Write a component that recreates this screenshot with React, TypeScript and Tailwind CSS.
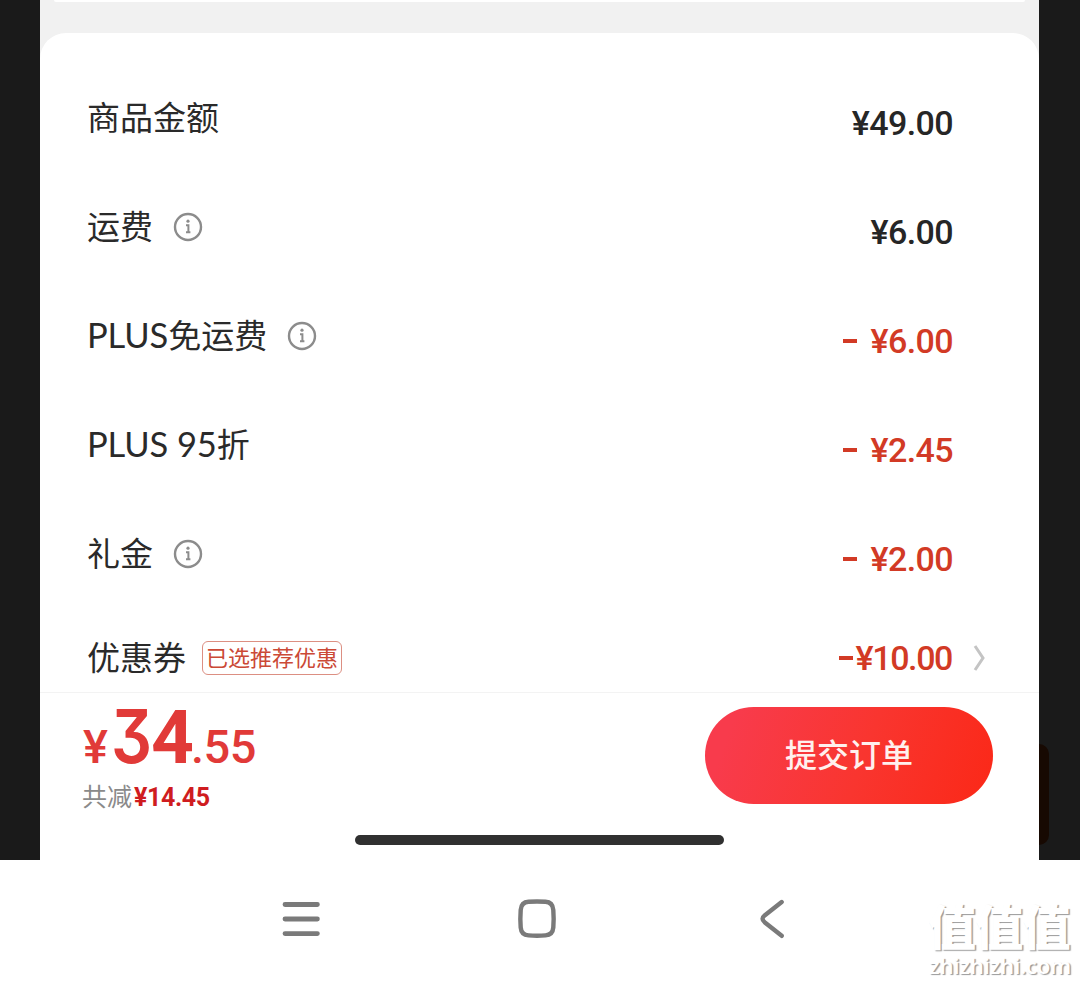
import React from "react";

const price = "font-['Roboto','Noto_Sans_CJK_SC',sans-serif] font-medium whitespace-pre";

function InfoIcon() {
  return (
    <svg className="ml-[20px] h-[30px] w-[30px] shrink-0" viewBox="0 0 30 30" fill="none" stroke="#8c8c8c">
      <circle cx="15" cy="15" r="13" strokeWidth="2.4" />
      <path d="M13 13.2h2.4v7M13 20.2h4.4" strokeWidth="2" />
      <circle cx="15" cy="9.2" r="1.6" fill="#8c8c8c" stroke="none" />
    </svg>
  );
}

type RowProps = {
  latin?: string;
  label: string;
  info?: boolean;
  sign?: boolean;
  amount: string;
  red?: boolean;
};

function Row({ latin, label, info, sign, amount, red }: RowProps) {
  return (
    <div className="flex h-[109px] shrink-0 items-center justify-between pr-[86px] pl-[47px]">
      <div className="flex items-center text-[#2a2a2a]">
        <span className="mt-[-3px] flex items-baseline whitespace-pre text-[33px] leading-[48px]">
          {latin && <span className="font-['Lato',sans-serif] text-[34.5px] tracking-[-0.1px]">{latin}</span>}
          <span className="font-['Noto_Sans_CJK_SC',sans-serif]">{label}</span>
        </span>
        {info && <InfoIcon />}
      </div>
      <div className={`mt-[10px] flex items-center text-[34px] leading-[40px] ${price} ${red ? "text-[#d23a25]" : "text-[#262626]"}`}>
        {sign && <span className="mr-[14px] h-[4px] w-[14px] bg-[#d23a25]" />}
        <span className="tracking-[-0.6px]">{amount}</span>
      </div>
    </div>
  );
}

const rows: RowProps[] = [
  { label: "商品金额", amount: "¥49.00" },
  { label: "运费", info: true, amount: "¥6.00" },
  { latin: "PLUS", label: "免运费", info: true, sign: true, amount: "¥6.00", red: true },
  { latin: "PLUS 95", label: "折", sign: true, amount: "¥2.45", red: true },
  { label: "礼金", info: true, sign: true, amount: "¥2.00", red: true },
];

export default function App() {
  return (
    <div className="flex h-[984px] w-[1080px] flex-col overflow-hidden bg-white">
      <div className="flex h-[860px] shrink-0 bg-[#1a1a1a]">
        <div className="w-[40px] shrink-0" />
        <main className="flex w-[999px] shrink-0 flex-col bg-[#f1f1f1]">
          <div className="mx-[14px] h-[2px] rounded-b-[12px] bg-white" />
          <section className="mt-[31px] flex h-[659px] flex-col overflow-hidden rounded-t-[26px] bg-white pt-[30px]">
            {rows.map((r) => (
              <Row key={r.label} {...r} />
            ))}
            <div className="flex h-[99px] shrink-0 items-center justify-between pr-[51px] pl-[47px]">
              <div className="flex items-center">
                <span className="mt-[-4px] font-['Noto_Sans_CJK_SC',sans-serif] text-[33px] leading-[48px] text-[#2a2a2a]">优惠券</span>
                <span className="ml-[16px] flex h-[34px] w-[140px] items-center justify-center rounded-[6px] border border-[#dc8f82] pb-[4px] font-['Noto_Sans_CJK_SC',sans-serif] text-[22px] leading-[30px] whitespace-nowrap text-[#cb4936]">
                  已选推荐优惠
                </span>
              </div>
              <div className={`flex items-center text-[34px] leading-[40px] text-[#d23a25] ${price}`}>
                <span className="mr-[3px] h-[4px] w-[14px] bg-[#d23a25]" />
                <span className="tracking-[-1.4px]">¥10.00</span>
                <svg className="ml-[20px] h-[28px] w-[16px]" viewBox="0 0 16 28" fill="none" stroke="#c4c4c4" strokeWidth="3">
                  <path d="M3 2l8 12-8 12" />
                </svg>
              </div>
            </div>
          </section>
          <footer className="flex h-[168px] flex-col border-t border-[#f3f3f3] bg-white">
            <div className="flex h-[120px] items-start justify-between pr-[46px] pl-[42px]">
              <div className="flex flex-col pt-[13px]">
                <div className={`flex h-[60px] items-baseline text-[#e13a38] ${price}`}>
                  <span className="w-[29px] pl-[1px] text-[47px] leading-[40px]">¥</span>
                  <span className="inline-block w-[40px] origin-left scale-x-[0.87] font-['Inter',sans-serif] text-[74px] leading-[60px] font-semibold [font-feature-settings:'cv09']">3</span>
                  <span className="w-[40px] text-[75px] leading-[60px] font-bold tracking-[-3px]">4</span>
                  <span className="text-[47px] leading-[40px] tracking-[-0.5px]">.55</span>
                </div>
                <div className="mt-[15px] flex h-[28px] items-center text-[25px] leading-[28px]">
                  <span className="font-['Noto_Sans_CJK_SC',sans-serif] font-normal text-[#8a8a8a]">共减</span>
                  <span className="mt-[5px] ml-[2px] font-['Roboto',sans-serif] font-bold tracking-[-0.4px] text-[#cf1c20]">¥14.45</span>
                </div>
              </div>
              <button className="mt-[14px] flex h-[97px] w-[288px] items-center justify-center rounded-full bg-[linear-gradient(110deg,#f83b4c_10%,#f9352f_55%,#fb2817_100%)] pb-[5px] font-['Noto_Sans_CJK_SC',sans-serif] text-[32px] leading-[48px] font-medium text-[#fff0ee]">
                提交订单
              </button>
            </div>
            <div className="mt-[22px] ml-[315px] h-[10px] w-[369px] rounded-full bg-[#303030]" />
          </footer>
        </main>
        <div className="flex flex-1 flex-col justify-end pb-[15px]">
          <div className="h-[101px] w-[10px] rounded-r-[10px] bg-[#170902]" />
        </div>
      </div>
      <nav className="flex h-[124px] shrink-0 items-start bg-white pl-[282px]">
        <svg className="mt-[39px] h-[40px] w-[39px]" viewBox="0 0 39 40" fill="none" stroke="#7a7a7a" strokeWidth="4.8" strokeLinecap="round">
          <path d="M3 5.5h32.4M3 20h32.4M3 34.6h32.4" />
        </svg>
        <svg className="mt-[38px] ml-[195px] h-[42px] w-[42px]" viewBox="0 0 42 42" fill="none" stroke="#7a7a7a" strokeWidth="4.4">
          <path d="M12.5 3.8Q21 3.2 29.5 3.8Q36.7 4.2 37.3 12Q38 20.7 37.3 29.5Q36.7 36.9 29.5 37.4Q21 38 12.5 37.4Q5.3 36.9 4.7 29.5Q4 20.7 4.7 12Q5.3 4.2 12.5 3.8Z" />
        </svg>
        <svg className="mt-[38px] ml-[198px] h-[42px] w-[32px]" viewBox="0 0 32 42" fill="none" stroke="#7a7a7a" strokeWidth="4.4" strokeLinecap="round">
          <path d="M25.7 4L8.6 17.5Q4.5 20.7 8.6 24.2L25.7 37.8" />
        </svg>
        <div className="mt-[39px] ml-[140px] flex w-[150px] flex-col text-white [text-shadow:1.5px_1px_1px_#999]">
          <span className="font-['Noto_Sans_CJK_SC',sans-serif] text-[48px] leading-[50px] font-black tracking-[-0.8px] whitespace-nowrap">值值值</span>
          <span className="mt-[5px] ml-[1px] font-['Noto_Sans',sans-serif] text-[22px] leading-[22px] font-semibold tracking-[-0.2px] whitespace-nowrap">zhizhizhi.com</span>
        </div>
      </nav>
    </div>
  );
}
